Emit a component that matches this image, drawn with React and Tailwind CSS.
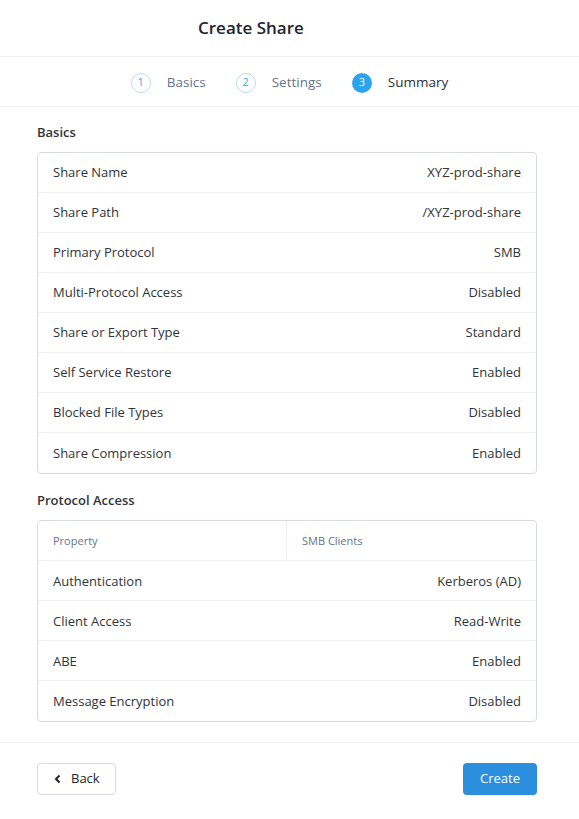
import React from 'react';

const basics = [
  ['Share Name', 'XYZ-prod-share'],
  ['Share Path', '/XYZ-prod-share'],
  ['Primary Protocol', 'SMB'],
  ['Multi-Protocol Access', 'Disabled'],
  ['Share or Export Type', 'Standard'],
  ['Self Service Restore', 'Enabled'],
  ['Blocked File Types', 'Disabled'],
  ['Share Compression', 'Enabled'],
];

const protocol = [
  ['Authentication', 'Kerberos (AD)'],
  ['Client Access', 'Read-Write'],
  ['ABE', 'Enabled'],
  ['Message Encryption', 'Disabled'],
];

const Step = ({ n, label, active }) => (
  <div className="flex items-center">
    <span
      className={
        active
          ? 'flex h-[20px] w-[20px] items-center justify-center rounded-full bg-[#2ba3ee] text-[11px] text-white'
          : 'flex h-[20px] w-[20px] items-center justify-center rounded-full border border-[#b6def7] text-[11px] text-[#3aa6ee]'
      }
    >
      {n}
    </span>
    <span className={`ml-[16px] text-[13.5px] ${active ? 'text-[#2b2f36]' : 'text-[#65758a]'}`}>{label}</span>
  </div>
);

const Row = ({ label, value }) => (
  <div className="flex h-[40px] items-center justify-between border-b border-[#eef0f3] px-[15px] pt-[2px] last:border-b-0">
    <span>{label}</span>
    <span>{value}</span>
  </div>
);

export default function App() {
  return (
    <div className="flex min-h-screen flex-col bg-white text-[13px] text-[#30343b]" style={{ fontFamily: '"Open Sans", sans-serif' }}>
      <div className="flex h-[57px] items-center border-b border-[#eef0f3] pl-[198px]">
        <h1 className="text-[17px] font-semibold text-[#22262c]">Create Share</h1>
      </div>

      <div className="flex h-[50px] items-center justify-center gap-[30px] border-b border-[#eef0f3] pt-[2px]">
        <Step n="1" label="Basics" />
        <Step n="2" label="Settings" />
        <Step n="3" label="Summary" active />
      </div>

      <div className="pl-[37px] pr-[42px] pt-[16px]">
        <h2 className="mb-[9px] font-semibold">Basics</h2>
        <div className="rounded-[4px] border border-[#d7dbe1]">
          {basics.map(([l, v]) => (
            <Row key={l} label={l} value={v} />
          ))}
        </div>

        <h2 className="mb-[10px] mt-[17px] font-semibold">Protocol Access</h2>
        <div className="rounded-[4px] border border-[#d7dbe1]">
          <div className="grid h-[40px] grid-cols-2 border-b border-[#eef0f3] text-[11px] text-[#65758a]">
            <div className="flex items-center border-r border-[#eef0f3] px-[15px] pt-[2px]">Property</div>
            <div className="flex items-center px-[15px] pt-[2px]">SMB Clients</div>
          </div>
          {protocol.map(([l, v]) => (
            <Row key={l} label={l} value={v} />
          ))}
        </div>
      </div>

      <div className="mt-[20px] flex items-center justify-between border-t border-[#eef0f3] pb-[24px] pl-[37px] pr-[42px] pt-[20px]">
        <button className="flex h-[32px] items-center gap-[8px] rounded-[4px] border border-[#d7dbe1] px-[15px] text-[13px] text-[#22262c]">
          <svg width="10" height="10" viewBox="0 0 10 10" fill="none" stroke="currentColor" strokeWidth="2">
            <path d="M6.5 1.5 3 5l3.5 3.5" />
          </svg>
          Back
        </button>
        <button className="h-[32px] rounded-[4px] bg-[#2b8fde] px-[17px] text-[13px] text-white">Create</button>
      </div>
    </div>
  );
}
